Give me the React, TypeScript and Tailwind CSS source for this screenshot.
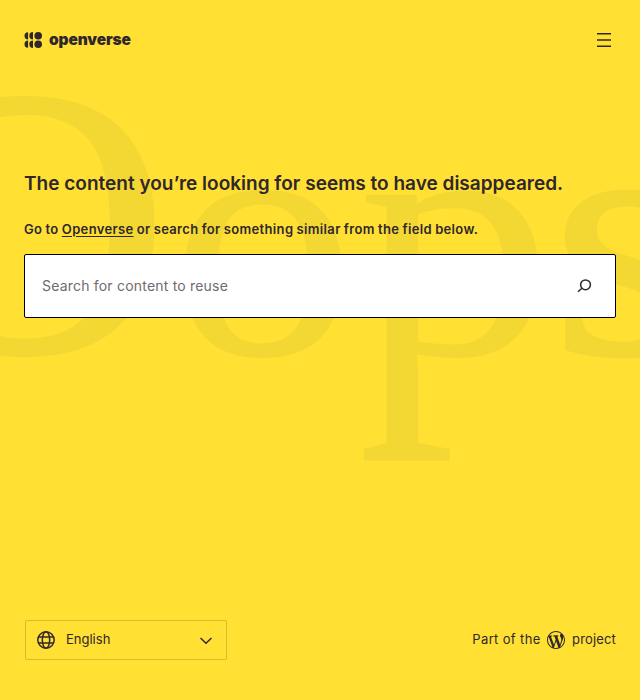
import React from "react";

function Backdrop() {
  return (
    <svg
      aria-hidden="true"
      className="pointer-events-none absolute inset-0 h-[700px] w-[640px] font-['Liberation_Serif',serif]"
      viewBox="0 0 640 700"
      fill="#f3d733"
      stroke="#f3d733"
    >
      <defs>
        <clipPath id="bowl">
          <rect x="340" y="150" width="220" height="212" />
        </clipPath>
        <clipPath id="stem">
          <rect x="340" y="362" width="220" height="120" />
        </clipPath>
      </defs>
      <text transform="translate(-118 351.5) scale(3.97 3.83)" fontSize="100" strokeWidth="1">O</text>
      <text transform="translate(171 354) scale(3.68 3.47)" fontSize="100" strokeWidth=".3">o</text>
      <g clipPath="url(#bowl)">
        <text id="letter-p" transform="translate(357.5 354.5) scale(3.92 3.48)" fontSize="100" strokeWidth="0">p</text>
      </g>
      <g clipPath="url(#stem)">
        <use href="#letter-p" transform="translate(0 -163) scale(1 1.455)" />
      </g>
      <text transform="translate(551 353.5) scale(3.85 3.44)" fontSize="100" strokeWidth="1">s</text>
    </svg>
  );
}

function Logo() {
  return (
    <div className="flex items-center gap-[6px]">
      <svg width="19" height="16" viewBox="0 0 19 16" fill="#30272e">
        <path d="M4.1 .2A3.6 3.6 0 0 0 4.1 7.4ZM4.1 8.6A3.6 3.6 0 0 0 4.1 15.8Z" />
        <path d="M9 .1A3.7 3.7 0 0 0 9 7.5ZM9 8.5A3.7 3.7 0 0 0 9 15.9Z" />
        <circle cx="14.2" cy="3.8" r="3.8" />
        <circle cx="14.2" cy="12.2" r="3.8" />
      </svg>
      <span className="-mt-px text-[15.5px] leading-none font-black tracking-[-0.15px]">openverse</span>
    </div>
  );
}

function WordPressMark() {
  return (
    <svg className="mr-[7px] ml-[6.5px]" width="18" height="18" viewBox="0 0 20 20" fill="#30272e">
      <path d="M20 10c0-5.51-4.49-10-10-10C4.48 0 0 4.49 0 10c0 5.52 4.48 10 10 10 5.51 0 10-4.48 10-10zM7.78 15.37L4.37 6.22c.55-.02 1.17-.08 1.17-.08.5-.06.44-1.13-.06-1.11 0 0-1.45.11-2.37.11-.18 0-.37 0-.58-.01C4.12 2.69 6.87 1.11 10 1.11c2.33 0 4.45.87 6.05 2.34-.68-.11-1.65.39-1.65 1.58 0 .74.45 1.36.9 2.1.35.61.55 1.36.55 2.46 0 1.49-1.4 5-1.4 5l-3.03-8.37c.54-.02.82-.17.82-.17.5-.05.44-1.25-.06-1.22 0 0-1.44.12-2.38.12-.87 0-2.33-.12-2.33-.12-.5-.03-.56 1.2-.06 1.22l.92.08 1.26 3.41zM17.41 10c.24-.64.74-1.87.43-4.25.7 1.29 1.05 2.71 1.05 4.25 0 3.29-1.73 6.24-4.4 7.78.97-2.59 1.94-5.2 2.92-7.78zM6.1 18.09C3.12 16.65 1.11 13.53 1.11 10c0-1.3.23-2.48.72-3.59C3.25 10.3 4.67 14.2 6.1 18.09zm4.03-6.63l2.58 6.98c-.86.29-1.76.45-2.71.45-.79 0-1.57-.11-2.29-.33.81-2.38 1.62-4.74 2.42-7.1z" />
    </svg>
  );
}

export default function App() {
  return (
    <div className="relative flex h-[700px] w-[640px] flex-col overflow-hidden bg-[#ffe033] font-['Inter',sans-serif] text-[#30272e]">
      <Backdrop />
      <header className="relative flex h-20 items-center justify-between px-6">
        <Logo />
        <button className="flex w-6 justify-center" aria-label="Menu">
          <svg width="14" height="14" viewBox="0 0 14 14" stroke="#30272e" strokeWidth="1.5">
            <path d="M0 .75H14M0 7H14M0 13.25H14" />
          </svg>
        </button>
      </header>
      <main className="relative flex-1 px-6 pt-[91px]">
        <h1 className="text-[19px] leading-[26px] font-semibold tracking-[0.01px] whitespace-nowrap">
          The content you’re looking for seems to have disappeared.
        </h1>
        <p className="mt-[22px] text-[13px] leading-[20px] font-semibold tracking-[0.34px] [word-spacing:-0.4px] whitespace-nowrap">
          Go to <a className="underline underline-offset-2" href="#">Openverse</a> or search for something similar from the field below.
        </p>
        <div className="mt-[15px] flex h-16 items-center justify-between rounded-xs border border-black bg-white pr-[23px] pl-[17px]">
          <span className="-mt-0.5 text-[14px] tracking-[0.2px] text-[#706b6f]">Search for content to reuse</span>
          <svg width="15" height="14" viewBox="0 0 15 14" fill="none" stroke="#30272e" strokeWidth="1.5">
            <circle cx="8.5" cy="5.8" r="4.9" />
            <path d="M4.9 9.2L1 12.7" />
          </svg>
        </div>
      </main>
      <footer className="relative flex h-20 items-start justify-between px-6">
        <button className="ml-px flex h-10 w-[202px] items-center rounded-xs border border-[#d6bc32] pr-[14px] pl-[11px] text-[13px]">
          <svg width="18" height="18" viewBox="0 0 18 18" fill="none" stroke="#30272e" strokeWidth="1.5">
            <circle cx="9" cy="9" r="8.2" />
            <ellipse cx="9" cy="9" rx="3.7" ry="8.2" />
            <path d="M1.5 6H16.5M1.5 12H16.5" />
          </svg>
          <span className="ml-[11px]">English</span>
          <svg className="mt-0.5 ml-auto" width="12" height="8" viewBox="0 0 12 8" fill="none" stroke="#30272e" strokeWidth="1.5">
            <path d="M.5 1L6 6.2L11.5 1" />
          </svg>
        </button>
        <div className="flex h-10 items-center text-[13px]">
          <span className="tracking-[0.35px]">Part of the</span>
          <WordPressMark />
          <span className="tracking-[0.15px]">project</span>
        </div>
      </footer>
    </div>
  );
}
